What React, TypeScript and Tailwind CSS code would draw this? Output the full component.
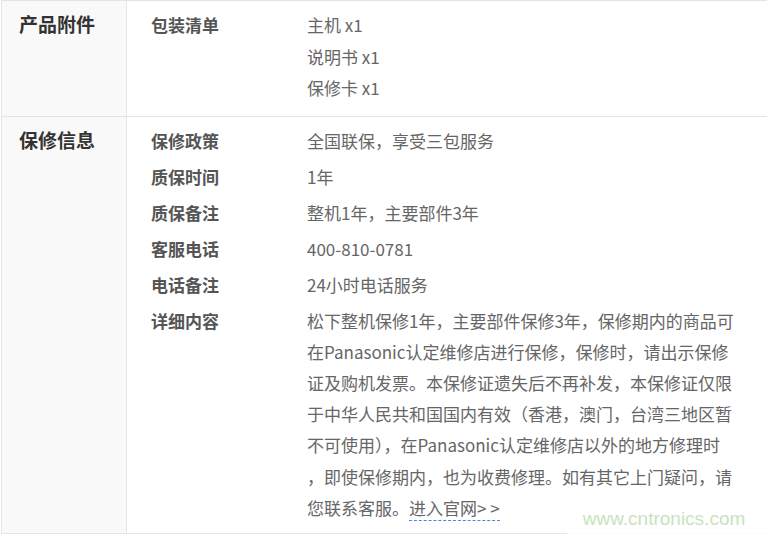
import React from 'react';

const font = { fontFamily: '"Noto Sans CJK SC", "Noto Sans", sans-serif' };

const detailLines = [
  '松下整机保修1年，主要部件保修3年，保修期内的商品可',
  '在Panasonic认定维修店进行保修，保修时，请出示保修',
  '证及购机发票。本保修证遗失后不再补发，本保修证仅限',
  '于中华人民共和国国内有效（香港，澳门，台湾三地区暂',
  '不可使用），在Panasonic认定维修店以外的地方修理时',
  '，即使保修期内，也为收费修理。如有其它上门疑问，请',
];

const Item: React.FC<{ label: string; children: React.ReactNode }> = ({ label, children }) => (
  <div className="flex py-[2px]">
    <div className="w-[180px] shrink-0 pl-[24px] text-[17px] font-bold leading-[32px] text-[#555]">{label}</div>
    <div className="flex-1 text-[17px] text-[#666]">{children}</div>
  </div>
);

const Section: React.FC<{ title: string; pb: string; children: React.ReactNode }> = ({ title, pb, children }) => (
  <div className="flex border-t border-[#e4e4e4]">
    <div className="w-[125px] shrink-0 border-r border-[#e4e4e4] bg-[#f9f9f9] pl-[17px] pt-[7px] text-[19px] font-bold leading-[32px] text-[#333]">
      {title}
    </div>
    <div className={`flex-1 pt-[6px] ${pb}`}>{children}</div>
  </div>
);

export default function App() {
  return (
    <div className="relative h-[536px] w-[767px] overflow-hidden bg-white" style={font}>
      <div className="ml-[1px] border-b border-l border-[#e4e4e4]">
        <Section title="产品附件" pb="pb-[10px]">
          <Item label="包装清单">
            <div className="leading-[31.5px]">
              <div>主机 x1</div>
              <div>说明书 x1</div>
              <div>保修卡 x1</div>
            </div>
          </Item>
        </Section>
        <Section title="保修信息" pb="pb-[8px]">
          <Item label="保修政策"><div className="leading-[32px]">全国联保，享受三包服务</div></Item>
          <Item label="质保时间"><div className="leading-[32px]">1年</div></Item>
          <Item label="质保备注"><div className="leading-[32px]">整机1年，主要部件3年</div></Item>
          <Item label="客服电话"><div className="leading-[32px]">400-810-0781</div></Item>
          <Item label="电话备注"><div className="leading-[32px]">24小时电话服务</div></Item>
          <Item label="详细内容">
            <div className="whitespace-nowrap leading-[31.2px]">
              {detailLines.map((l) => (
                <div key={l}>{l}</div>
              ))}
              <div>
                您联系客服。
                <a className="border-b border-dashed border-[#3a8ee6] text-[#666]">进入官网&gt; &gt;</a>
              </div>
            </div>
          </Item>
        </Section>
      </div>
      <div
        className="absolute right-0 top-[504px] flex h-[30px] w-[200px] items-center justify-center bg-white/80 pr-[6px] text-[19px] text-[#c6e4bd]"
        style={{ fontFamily: '"Liberation Sans", Arial, sans-serif' }}
      >
        www.cntronics.com
      </div>
    </div>
  );
}
